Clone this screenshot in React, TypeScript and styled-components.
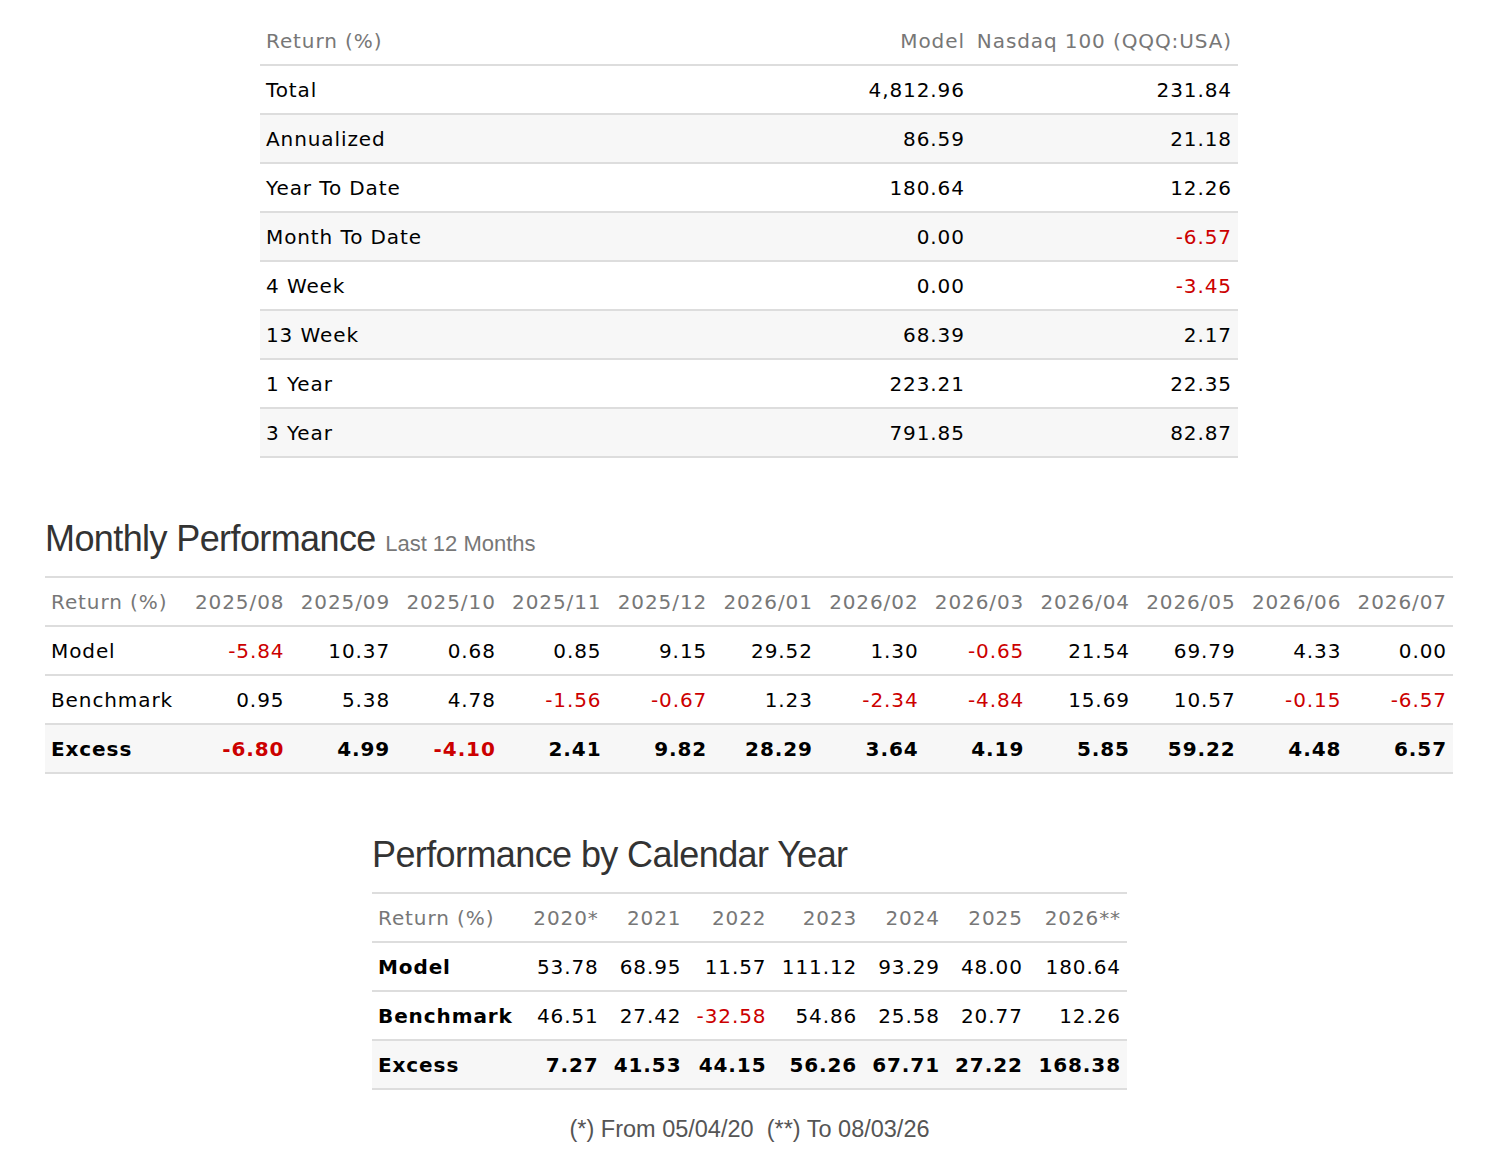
import React from "react";
import styled, { createGlobalStyle } from "styled-components";

const Global = createGlobalStyle`
  body { margin: 0; background: #fff; font-family: "DejaVu Sans", Verdana, sans-serif; }
`;

const Page = styled.div`
  display: flex; flex-direction: column; align-items: flex-start;
  padding: 17px 41px 0 45px;
`;
const Block = styled.div<{ $w: number; $ml: number }>`
  width: ${p => p.$w}px; margin-left: ${p => p.$ml}px;
`;
const Table = styled.table<{ $top?: boolean }>`
  width: 100%; border-collapse: collapse; font-size: 20px; color: #000; letter-spacing: 0.9px;
  ${p => (p.$top ? "border-top: 2px solid #ddd;" : "")}
`;
const Th = styled.th<{ $left?: boolean; $grow?: boolean }>`
  color: #777; font-weight: normal; text-align: ${p => (p.$left ? "left" : "right")};
  padding: 0 6px; height: 47px; white-space: nowrap; border-bottom: 2px solid #ddd;
  ${p => (p.$grow ? "width: 100%;" : "")}
`;
const Tr = styled.tr<{ $shade?: boolean; $bold?: boolean }>`
  background: ${p => (p.$shade ? "#f7f7f7" : "#fff")};
  font-weight: ${p => (p.$bold ? "bold" : "normal")};
`;
const Td = styled.td<{ $left?: boolean; $neg?: boolean; $bold?: boolean }>`
  text-align: ${p => (p.$left ? "left" : "right")};
  color: ${p => (p.$neg ? "#cc0000" : "#000")};
  font-weight: ${p => (p.$bold ? "bold" : "inherit")};
  padding: 0 6px; height: 47px; white-space: nowrap; border-bottom: 2px solid #ddd;
`;
const Heading = styled.h2<{ $mt: number }>`
  margin: ${p => p.$mt}px 0 16px; font-family: "Liberation Sans", Helvetica, sans-serif;
  font-weight: normal; font-size: 36px; color: #333; letter-spacing: -0.6px;
`;
const Sub = styled.span`
  font-size: 22px; color: #777; letter-spacing: 0;
`;
const Note = styled.div`
  text-align: center; margin-top: 26px; font-family: "Liberation Sans", Helvetica, sans-serif;
  font-size: 23.5px; color: #555;
`;

const neg = (v: string) => v.startsWith("-");

const top = [
  ["Total", "4,812.96", "231.84"],
  ["Annualized", "86.59", "21.18"],
  ["Year To Date", "180.64", "12.26"],
  ["Month To Date", "0.00", "-6.57"],
  ["4 Week", "0.00", "-3.45"],
  ["13 Week", "68.39", "2.17"],
  ["1 Year", "223.21", "22.35"],
  ["3 Year", "791.85", "82.87"],
];
const months = ["2025/08","2025/09","2025/10","2025/11","2025/12","2026/01","2026/02","2026/03","2026/04","2026/05","2026/06","2026/07"];
const monthly: [string, string[]][] = [
  ["Model", ["-5.84","10.37","0.68","0.85","9.15","29.52","1.30","-0.65","21.54","69.79","4.33","0.00"]],
  ["Benchmark", ["0.95","5.38","4.78","-1.56","-0.67","1.23","-2.34","-4.84","15.69","10.57","-0.15","-6.57"]],
  ["Excess", ["-6.80","4.99","-4.10","2.41","9.82","28.29","3.64","4.19","5.85","59.22","4.48","6.57"]],
];
const years = ["2020*","2021","2022","2023","2024","2025","2026**"];
const yearly: [string, string[]][] = [
  ["Model", ["53.78","68.95","11.57","111.12","93.29","48.00","180.64"]],
  ["Benchmark", ["46.51","27.42","-32.58","54.86","25.58","20.77","12.26"]],
  ["Excess", ["7.27","41.53","44.15","56.26","67.71","27.22","168.38"]],
];

export default function App() {
  return (
    <Page>
      <Global />
      <Block $w={978} $ml={215}>
        <Table>
          <thead><tr><Th $left $grow>Return (%)</Th><Th>Model</Th><Th>Nasdaq 100 (QQQ:USA)</Th></tr></thead>
          <tbody>
            {top.map((r, i) => (
              <Tr key={r[0]} $shade={i % 2 === 1}>
                <Td $left>{r[0]}</Td>
                <Td $neg={neg(r[1])}>{r[1]}</Td>
                <Td $neg={neg(r[2])}>{r[2]}</Td>
              </Tr>
            ))}
          </tbody>
        </Table>
      </Block>
      <Block $w={1408} $ml={0}>
        <Heading $mt={60}>Monthly Performance <Sub>Last 12 Months</Sub></Heading>
        <Table $top>
          <thead><tr><Th $left>Return (%)</Th>{months.map(m => <Th key={m}>{m}</Th>)}</tr></thead>
          <tbody>
            {monthly.map(([n, v], i) => (
              <Tr key={n} $shade={i === 2} $bold={i === 2}>
                <Td $left>{n}</Td>
                {v.map((x, j) => <Td key={j} $neg={neg(x)}>{x}</Td>)}
              </Tr>
            ))}
          </tbody>
        </Table>
      </Block>
      <Block $w={755} $ml={327}>
        <Heading $mt={60}>Performance by Calendar Year</Heading>
        <Table $top>
          <thead><tr><Th $left>Return (%)</Th>{years.map(m => <Th key={m}>{m}</Th>)}</tr></thead>
          <tbody>
            {yearly.map(([n, v], i) => (
              <Tr key={n} $shade={i === 2} $bold={i === 2}>
                <Td $left $bold>{n}</Td>
                {v.map((x, j) => <Td key={j} $neg={neg(x)}>{x}</Td>)}
              </Tr>
            ))}
          </tbody>
        </Table>
        <Note>(*) From 05/04/20&nbsp; (**) To 08/03/26</Note>
      </Block>
    </Page>
  );
}
